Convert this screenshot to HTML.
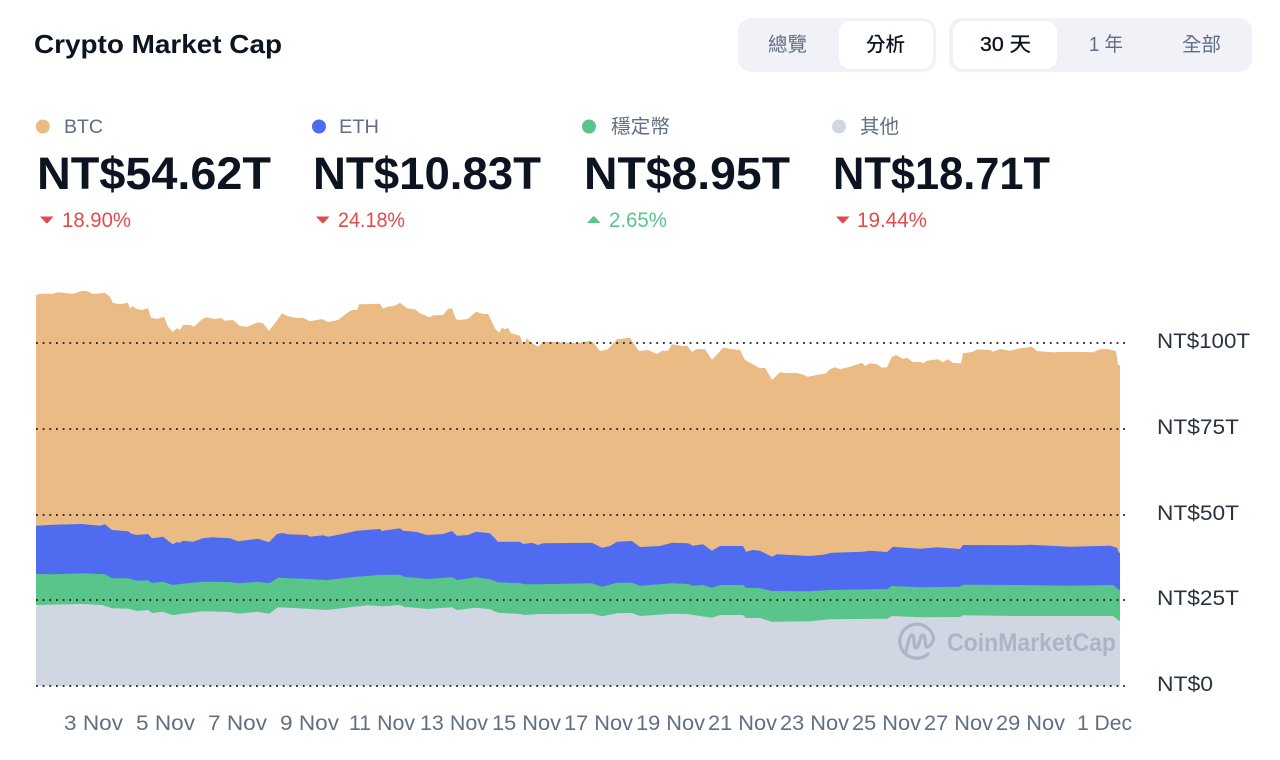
<!DOCTYPE html>
<html lang="zh-Hant">
<head>
<meta charset="utf-8">
<title>Crypto Market Cap</title>
<style>
html,body{margin:0;padding:0;background:#fff;width:1280px;height:760px;overflow:hidden}
svg{display:block}
text{font-family:"Liberation Sans","Noto Sans CJK TC",sans-serif}
.cjk{font-family:"Noto Sans CJK TC","Liberation Sans",sans-serif}
.m{fill:#616E85}
.x{fill:#616E85;font-size:21px}
.y{fill:#2b3340;font-size:21px}
.v{fill:#0D1421;font-size:45px;font-weight:700}
.c{font-size:21px}
.r{fill:#E04B4B}
.g{fill:#5AC58A}
</style>
</head>
<body>
<svg xmlns="http://www.w3.org/2000/svg" width="1280" height="760" viewBox="0 0 1280 760">
<rect width="1280" height="760" fill="#fff"/>

<text x="34" y="53" font-size="26" font-weight="700" fill="#0D1421" textLength="248" lengthAdjust="spacingAndGlyphs">Crypto Market Cap</text>

<rect x="738" y="18" width="198" height="54" rx="13" fill="#F0F2F7"/>
<rect x="839" y="21" width="94" height="48" rx="11" fill="#fff"/>
<text class="cjk m" x="768" y="51" font-size="19.5" textLength="39" lengthAdjust="spacingAndGlyphs">總覽</text>
<text class="cjk" x="866" y="51" font-size="19.5" font-weight="500" fill="#0D1421" textLength="39" lengthAdjust="spacingAndGlyphs">分析</text>

<rect x="949" y="18" width="303" height="54" rx="13" fill="#F0F2F7"/>
<rect x="953" y="21" width="104" height="48" rx="11" fill="#fff"/>
<text x="980" y="51" font-size="20" fill="#0D1421" stroke="#0D1421" stroke-width=".35" textLength="51" lengthAdjust="spacingAndGlyphs">30 天</text>
<text class="m" x="1089" y="51" font-size="20" textLength="34" lengthAdjust="spacingAndGlyphs">1 年</text>
<text class="cjk m" x="1182" y="51" font-size="19.5" textLength="39" lengthAdjust="spacingAndGlyphs">全部</text>

<circle cx="42.8" cy="126.5" r="7" fill="#EBBB86"/>
<text class="m" x="64" y="133" font-size="19.5" textLength="39" lengthAdjust="spacingAndGlyphs">BTC</text>
<text class="v" x="37" y="189" textLength="234" lengthAdjust="spacingAndGlyphs">NT$54.62T</text>
<path d="M40 216.5h13.5l-5.6 6.2q-1.1 1-2.2 0z" fill="#E04B4B"/>
<text class="c r" x="62" y="227" textLength="69" lengthAdjust="spacingAndGlyphs">18.90%</text>

<circle cx="319" cy="126.5" r="7" fill="#4F6CF0"/>
<text class="m" x="339" y="133" font-size="19.5" textLength="40" lengthAdjust="spacingAndGlyphs">ETH</text>
<text class="v" x="313" y="189" textLength="228" lengthAdjust="spacingAndGlyphs">NT$10.83T</text>
<path d="M316 216.5h13.5l-5.6 6.2q-1.1 1-2.2 0z" fill="#E04B4B"/>
<text class="c r" x="338" y="227" textLength="67" lengthAdjust="spacingAndGlyphs">24.18%</text>

<circle cx="589" cy="126.5" r="7" fill="#5AC58A"/>
<text class="cjk m" x="611" y="133" font-size="19.5" textLength="59" lengthAdjust="spacingAndGlyphs">穩定幣</text>
<text class="v" x="584" y="189" textLength="206" lengthAdjust="spacingAndGlyphs">NT$8.95T</text>
<path d="M587 223h13.5l-5.6-6.2q-1.1-1-2.2 0z" fill="#5AC58A"/>
<text class="c g" x="609" y="227" textLength="58" lengthAdjust="spacingAndGlyphs">2.65%</text>

<circle cx="839" cy="126.5" r="7" fill="#D1D6E3"/>
<text class="cjk m" x="860" y="133" font-size="19.5" textLength="39" lengthAdjust="spacingAndGlyphs">其他</text>
<text class="v" x="833" y="189" textLength="217" lengthAdjust="spacingAndGlyphs">NT$18.71T</text>
<path d="M836 216.5h13.5l-5.6 6.2q-1.1 1-2.2 0z" fill="#E04B4B"/>
<text class="c r" x="857" y="227" textLength="70" lengthAdjust="spacingAndGlyphs">19.44%</text>

<!-- BTC -->
<path fill="#EBBB86" d="M36 686V295L40 293.7 53 293.7 58 292.3 73 293.7 82 291 87 291 93 294 105 292.7 110 296.7 113 303 120 304.3 128 302.7 130 309 132 306 137 309 142 310 148 308 151 317.7 157 319 164 316.7 168 326.7 173 332 177 328 180 330 183 325 190 324.7 194 326.7 202 319.3 206 317.3 215 319 221 318 225 320.7 233 320 240 326 247 326.7 258 322.3 263 323.3 269 330.7 275 323.3 282 313.3 288 316.3 297 318 303 317.7 310 321.3 322 319 328 322 338 320 347 313 352 310 357 310 359 304.3 380 303.7 383 308.7 387 306.7 395 305.7 400 302.7 407 308.3 415 309.3 420 313.3 430 317.3 433 315.3 443 315 448 309 452 308.3 456 319.3 460 320 468 318.7 476 311.7 483 314 488 314 495 328.3 499 332.7 502 327.7 505 329.3 508 327.7 511 333.3 520 335.7 523 345 527 338.3 530 341.7 538 346.7 543 341.7 560 342.3 577 343.3 590 340.7 594 343.3 600 351 608 349.3 617 339.3 630 337.7 639 351 648 350 657 354 662 350.7 668 350.7 672 344.3 682 346 687 345.7 692 352 697 349 705 349.3 712 359.7 715 356.7 723 347.7 733 349.3 740 350 745 360 760 368.3 765 367.7 772 380 774 378 780 372.3 787 373.3 795 372.7 802 374.3 808 376.7 820 374.3 825 374 830 369.3 835 367.3 840 369.3 850 366.7 862 362.7 865 366 870 363.3 877 364.3 882 367.7 887 367.3 892 356.7 896 355 903 359 907 357.7 913 362.3 920 361.7 923 363.3 927 360.7 938 359.3 943 362.3 948 359.3 953 363 961 363.3 963 353.3 973 351.7 977 349.3 990 350 993 351.7 1000 349 1010 350.7 1020 348.3 1032 346.7 1037 351 1053 352.3 1068 351.7 1093 352.3 1100 349.3 1107 349 1116 351 1118 365 1120 365V686Z"/>
<!-- ETH -->
<path fill="#4F6CF0" d="M36 686V525.7L53 524.7 82 524 100 525.7 105 524.3 112 530 128 531.3 132 534 137 535 148 534 152 538.3 163 536.7 168 540.7 173 544.3 177 542 180 542.7 183 540.7 193 541.7 203 538.3 212 537.3 230 538.3 238 541.3 258 538.7 269 542.3 277 534 282 533 288 534.3 307 535 310 536.7 323 535.3 328 536.7 342 534 357 530.7 380 529 382 531 400 528.3 403 530.7 410 531.3 417 532 427 535 443 534 452 531 457 535.7 468 535 476 531.7 490 533.3 498 541.7 520 541.7 523 544 532 542.7 538 545 543 543.3 592 542.7 602 547.7 610 546 617 541.7 632 541 640 547 660 546 672 542.7 688 543.3 693 545.7 703 544.3 712 550.7 720 546 743 546 746 551.7 753 550 760 550.7 772 556.7 777 554.3 810 556 823 554.7 832 552.7 863 551.7 870 550.7 887 552 893 546.7 920 548.7 937 547.3 960 549 963 545 1020 545.3 1030 544.7 1070 546.7 1110 545.7 1117 547.7 1119 552.7 1120 552.7V686Z"/>
<!-- Stable -->
<path fill="#5AC58A" d="M36 686V574L53 574.3 82 573.3 105 574.3 112 578.3 128 578.3 137 580.7 148 580.3 152 583 163 581.7 173 585 180 584 203 581.7 230 582 238 583.3 258 581.7 269 583.3 278 577.7 307 579 327 580 357 576.7 380 575 400 574.7 405 577 410 577.3 427 579 452 577.3 457 580 476 577.3 490 579.3 498 582.3 520 583.3 525 584.3 538 584.3 592 583.3 602 586.7 617 582.7 632 582.7 640 585.7 672 583.3 688 584 693 585.7 703 585 712 587.7 720 585 743 585 746 587.7 760 588.3 772 591 810 591.3 830 590 887 589 892 586 920 587.3 960 586.7 963 584.7 1020 585 1070 585.7 1113 585 1119 590 1120 590V686Z"/>
<!-- Others -->
<path fill="#D1D6E3" d="M36 686V605L82 604 102 605 112 608.3 128 608.7 137 611 148 610 152 613 163 611.7 173 615.3 180 614 203 611.3 230 612 238 613.7 258 611.7 269 613.7 278 607.3 307 608.7 327 610 367 605.3 383 606.3 400 605 405 607.3 410 607.3 427 609 452 607.3 457 610 476 607.7 490 609.3 498 612.7 520 614 525 615 538 614 592 613.7 602 616.3 617 613.3 632 613 640 616 672 613.7 688 614 693 615 712 617.7 720 615 743 615 746 618 760 618 772 621.7 810 621.3 830 619.3 887 618.7 892 616 920 617.3 960 617 963 615.3 1020 616 1113 616 1119 620.7 1120 620.7V686Z"/>

<!-- Watermark -->
<g fill="none" stroke="#AFB4C3" stroke-width="3.2" stroke-linecap="round" stroke-linejoin="round">
<path d="M933.5 638A17 17 0 1 0 928 654"/>
<path d="M906 651C908 645 909 635 912 635C915 635 913 648 916 648C919 648 920 635 923 635C926 635 924.5 647 927 647C930 647 932 643 933.5 639"/>
</g>
<text x="947" y="651" font-size="25" font-weight="700" fill="#AFB4C3" textLength="169" lengthAdjust="spacingAndGlyphs">CoinMarketCap</text>

<!-- Grid -->
<g stroke="#1c1c1c" stroke-width="1.8" stroke-dasharray="1.8 4.87" fill="none">
<path d="M36 343H1129"/>
<path d="M36 429H1129"/>
<path d="M36 515H1129"/>
<path d="M36 600H1129"/>
<path d="M36 686H1129"/>
</g>

<text class="y" x="1157" y="348" textLength="93" lengthAdjust="spacingAndGlyphs">NT$100T</text>
<text class="y" x="1157" y="434" textLength="82" lengthAdjust="spacingAndGlyphs">NT$75T</text>
<text class="y" x="1157" y="520" textLength="82" lengthAdjust="spacingAndGlyphs">NT$50T</text>
<text class="y" x="1157" y="605" textLength="82" lengthAdjust="spacingAndGlyphs">NT$25T</text>
<text class="y" x="1157" y="691" textLength="56" lengthAdjust="spacingAndGlyphs">NT$0</text>

<text class="x" x="64" y="730" textLength="59" lengthAdjust="spacingAndGlyphs">3 Nov</text>
<text class="x" x="136" y="730" textLength="59" lengthAdjust="spacingAndGlyphs">5 Nov</text>
<text class="x" x="208" y="730" textLength="59" lengthAdjust="spacingAndGlyphs">7 Nov</text>
<text class="x" x="280" y="730" textLength="59" lengthAdjust="spacingAndGlyphs">9 Nov</text>
<text class="x" x="349" y="730" textLength="66" lengthAdjust="spacingAndGlyphs">11 Nov</text>
<text class="x" x="420" y="730" textLength="68" lengthAdjust="spacingAndGlyphs">13 Nov</text>
<text class="x" x="492" y="730" textLength="69" lengthAdjust="spacingAndGlyphs">15 Nov</text>
<text class="x" x="564" y="730" textLength="69" lengthAdjust="spacingAndGlyphs">17 Nov</text>
<text class="x" x="636" y="730" textLength="69" lengthAdjust="spacingAndGlyphs">19 Nov</text>
<text class="x" x="708" y="730" textLength="69" lengthAdjust="spacingAndGlyphs">21 Nov</text>
<text class="x" x="780" y="730" textLength="69" lengthAdjust="spacingAndGlyphs">23 Nov</text>
<text class="x" x="852" y="730" textLength="69" lengthAdjust="spacingAndGlyphs">25 Nov</text>
<text class="x" x="924" y="730" textLength="69" lengthAdjust="spacingAndGlyphs">27 Nov</text>
<text class="x" x="996" y="730" textLength="69" lengthAdjust="spacingAndGlyphs">29 Nov</text>
<text class="x" x="1077" y="730" textLength="55" lengthAdjust="spacingAndGlyphs">1 Dec</text>
</svg>
</body>
</html>
